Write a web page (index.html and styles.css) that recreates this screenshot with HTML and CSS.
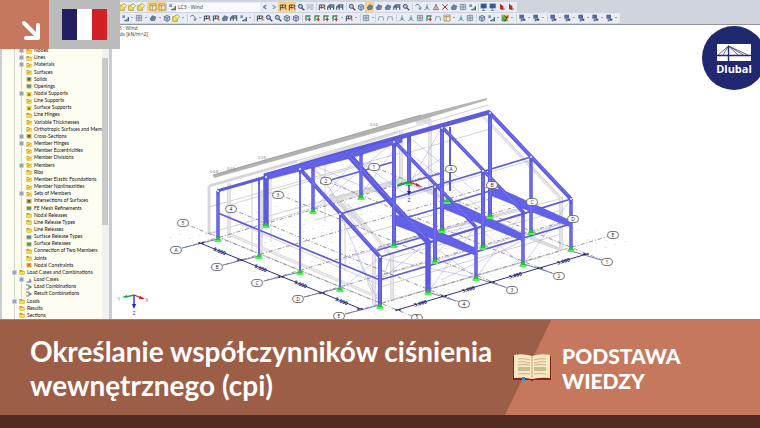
FILE: index.html
```html
<!DOCTYPE html>
<html lang="pl">
<head>
<meta charset="utf-8">
<title>Określanie współczynników ciśnienia wewnętrznego (cpi)</title>
<link rel="stylesheet" href="styles.css">
</head>
<body>
<svg class="symbols" aria-hidden="true">
  <symbol id="folder" viewBox="0 0 12 12"><path d="M1 2h4l1 1.500h5v7.500h-10z" fill="#b78b12"/><path d="M1.500 5h9v5.500h-9z" fill="#f8dc4c"/></symbol>
  <symbol id="member" viewBox="0 0 12 12"><path d="M1 2h4l1 1.500h5v7.500h-10z" fill="#c79a18"/><path d="M1.500 4h9v6.500h-9z" fill="#f8dc4c"/><path d="M3 9l6-4" stroke="#b5651d" stroke-width="1.500"/></symbol>
  <symbol id="solid" viewBox="0 0 12 12"><path d="M1 2h10v9h-10z" fill="#cfae28"/><path d="M3.500 4h5v5h-5z" fill="#3a62a0"/></symbol>
  <symbol id="support" viewBox="0 0 12 12"><path d="M1 2h10v9h-10z" fill="#ecc938"/><path d="M6 4l3 5h-6z" fill="#39751f"/></symbol>
  <symbol id="surface" viewBox="0 0 12 12"><path d="M1 2h10v9h-10z" fill="#c9b650"/><path d="M2 4h8v5h-8z" fill="#4b8daf"/></symbol>
  <symbol id="constraint" viewBox="0 0 12 12"><path d="M1 2h10v9h-10z" fill="#eab52e"/><path d="M3 4l6 5m0-5l-6 5" stroke="#c2421d" stroke-width="1.500"/></symbol>
  <symbol id="load" viewBox="0 0 12 12"><path d="M1 10h10M8 3v6M6 7l2 2 2-2" stroke="#33479c" stroke-width="1.500" fill="none"/></symbol>
  <symbol id="combo" viewBox="0 0 12 12"><path d="M0 2h6v8h-6" stroke="#555" stroke-width="1.500" fill="none"/><path d="M7 3l5 3-5 3z" fill="#1d8050"/></symbol>
  <symbol id="result" viewBox="0 0 12 12"><path d="M0 2h6v8h-6" stroke="#555" stroke-width="1.500" fill="none"/><path d="M7 3l5 3-5 3z" fill="#2d6bb5"/></symbol>

  <symbol id="t-open" viewBox="0 0 12 12"><path d="M1 4h7v7h-7z" fill="#f3dc55" stroke="#a98a1c"/><path d="M4 3l4-2 3 3-2 3" fill="#fff5a8" stroke="#8b8430"/></symbol>
  <symbol id="t-panel" viewBox="0 0 12 12"><path d="M1.500 1.500h9v9h-9z" fill="#fbeec3" stroke="#8c6f47"/><path d="M2 4h8M5 4v6" stroke="#8c6f47"/></symbol>
  <symbol id="t-case" viewBox="0 0 12 12"><path d="M2 2h4v4h-4z" fill="#7b93bb"/><path d="M5 10h6v-5" stroke="#3d5b96" stroke-width="2" fill="none"/><circle cx="9" cy="9" r="2" fill="#69a84a"/></symbol>
  <symbol id="t-prev" viewBox="0 0 12 12"><path d="M8 3l-4 3 4 3" stroke="#6578ae" stroke-width="2" fill="none"/></symbol>
  <symbol id="t-next" viewBox="0 0 12 12"><path d="M4 3l4 3-4 3" stroke="#94a1c0" stroke-width="2" fill="none"/></symbol>
  <symbol id="t-load" viewBox="0 0 12 12"><path d="M2 11v-8h8v3M5 3v5M2 7h8" stroke="#4a4f64" stroke-width="1.500" fill="none"/><path d="M8 5l3 5" stroke="#b3772b" stroke-width="2"/></symbol>
  <symbol id="t-find" viewBox="0 0 12 12"><circle cx="5" cy="5" r="3" fill="#a8c5e2" stroke="#44557d" stroke-width="1.500"/><path d="M7 7l4 4" stroke="#713f51" stroke-width="2"/></symbol>
  <symbol id="t-values" viewBox="0 0 12 12"><path d="M1 3h4m1 0h5M1 6h10M1 9h3m2 0h5" stroke="#9ba3b3" stroke-width="1.500"/></symbol>
  <symbol id="t-frame" viewBox="0 0 12 12"><path d="M1 10v-4l3-3h6v7M1 6h9M5 10v-6" stroke="#5b6983" stroke-width="2" fill="none"/></symbol>
  <symbol id="t-cube" viewBox="0 0 12 12"><path d="M2 4l4-2 4 2v5l-4 2-4-2z" fill="#b9c7dc" stroke="#465c87"/><path d="M2 4l4 2 4-2M6 6v5" stroke="#465c87" fill="none"/></symbol>
  <symbol id="t-render" viewBox="0 0 12 12"><path d="M1 7l4-5 6 2-2 6-6 1z" fill="#4f80b9"/><path d="M4 7l5-3-1 5z" fill="#d46347"/></symbol>
  <symbol id="t-rotate" viewBox="0 0 12 12"><path d="M2 4c3-4 8-1 7 5M7 8l2 2 2-3" stroke="#657086" stroke-width="1.500" fill="none"/></symbol>
  <symbol id="t-mirror" viewBox="0 0 12 12"><path d="M6 2l4 8h-8zM6 2v8" fill="#e4d9dd" stroke="#8e5260"/></symbol>
  <symbol id="t-cut" viewBox="0 0 12 12"><path d="M2 2l8 8M10 2l-8 8" stroke="#a83144" stroke-width="1.500"/></symbol>
  <symbol id="t-screen" viewBox="0 0 12 12"><path d="M1 1h9v7h-9z" fill="#345999"/><path d="M5 8v3M3 11h5" stroke="#5b6478"/></symbol>
  <symbol id="t-show" viewBox="0 0 12 12"><path d="M2 1h7v6h-7z" fill="#5269ae"/><path d="M4 7h3v4h-3z" fill="#6f7a90"/><path d="M7 7h4v3h-4z" fill="#49505f"/></symbol>
  <symbol id="t-book" viewBox="0 0 12 12"><path d="M3 1l5 4v6l-5-2z" fill="#bb2430"/><path d="M7 6l4 3-3 2z" fill="#d8726d"/></symbol>
  <symbol id="t-axes" viewBox="0 0 12 12"><path d="M3 10v-7h7" stroke="#3a8d52" stroke-width="2" fill="none"/><path d="M5 8h5M8 5v6" stroke="#bb3e45" stroke-width="2"/></symbol>
  <symbol id="t-mesh" viewBox="0 0 12 12"><path d="M2 2h8v8h-8z" fill="#cdd5e2"/><path d="M2 2h8v8h-8zM2 6h8M6 2v8" stroke="#6a7890" fill="none"/></symbol>
  <symbol id="t-line" viewBox="0 0 12 12"><path d="M2 10l1-6h6l1 6" stroke="#9ba5b6" stroke-width="1.500" fill="none"/></symbol>
  <symbol id="t-node" viewBox="0 0 12 12"><path d="M6 2v6l-4 2M6 8l4 2" stroke="#8392aa" stroke-width="1.500" fill="none"/><circle cx="6" cy="7" r="2" fill="#63a9a0"/></symbol>
  <symbol id="t-color" viewBox="0 0 12 12"><path d="M1 1h10v10h-10z" fill="#edc92c"/><path d="M1 1l10 10h-10z" fill="#51a450"/><path d="M6 6l5-5v5z" fill="#ce332f"/><path d="M4 2l5 4-4 5" stroke="#333" stroke-width="1.500" fill="none"/></symbol>
</svg>

<main class="page">
  <section class="workspace">
    <header class="toolbars">
      <div class="toolbar" data-row="first"></div>
      <div class="toolbar" data-row="second"></div>
    </header>
    <div class="panes">
      <aside class="navigator">
        <ul class="tree"></ul>
        <div class="scroll"><div class="thumb"></div></div>
      </aside>
      <div class="viewport">
        <svg class="model" viewBox="112 25 648 294" preserveAspectRatio="xMinYMin meet" role="img" aria-label="LC3 : Wind">
          <defs>
            <pattern id="dots" width="10" height="10" patternUnits="userSpaceOnUse" patternTransform="matrix(.96 -.28 .93 .38 218 240)"><circle cx="5" cy="5" r=".5" fill="#a9a9b2"/></pattern>
            <g id="foot"><path d="M0-3l3 4h-6z" fill="#22c92a"/><path d="M-3.500 1h7v2h-7z" fill="#48f552"/></g>
            <g id="bubble"><rect x="-5.500" y="-3.500" width="11" height="7" rx="3.500" fill="#fff" stroke="#555" stroke-width=".8"/></g>
            <path id="tick" d="M-2.500-1.300l2.500 1.300 2.500-1.300v2.600l-2.500-1.300-2.500 1.300z" fill="#171760"/>
          </defs>
          <g class="caption"><text x="113" y="30">LC3 : Wind</text><text x="111" y="36">Loads [kN/m^2]</text></g>
          <path d="M160 238l248-74 228 80-255 75z" fill="url(#dots)"/>

          <g class="ghost">
            <path d="M209 233v-47l191-55v48l-191 54 171 70 181-52v-54l-73-76M400 131l88-26M209 207l191-54M400 155l90-26M400 179l161 70"/>
            <path d="M380 276l181-52M380 287l181-53M392 243l171-45M392 258l171-48M392 300l150-43M230 205l142-43M265 222l135-39M315 220l130-36M350 238l150-42M380 246l155-42"/>
            <path d="M252 178v74M271 172v70M325 160v62M345 201v70M240 224l140 61M205 234l12-2M355 250l20 50 15-42M313 165l62 88"/>
          </g>
          <g class="ghost-wide">
            <path d="M229 183v55M261 190v66M401 130v51M430 123v71M374 253v52M392 252v48M561 197v53" stroke-width="4"/>
            <path d="M209 186v47M347 204l45 52M484 117l78 83M231 235l149 63M397 178l46 20M530 238l31 12M209 186l88-25M300 163l98-31" stroke-width="3"/>
            <path d="M330 200l72-20M330 194l40 38M416 123l15-4" stroke-width="4"/>
          </g>
          <g class="ghost-core"><path d="M229 183v55M401 130v51M430 123v71M374 253v52M392 252v48M561 197v53M347 204l45 52M484 117l78 83M231 235l149 63"/></g>
          <path d="M213 175l208-60v5l-207 58z" fill="#b2b2b3"/><path d="M213 175l208-60" stroke="#929294" stroke-width=".8"/>
          <path d="M421 115l66-17v2l-66 20z" fill="#b4b4b4"/>

          <g class="axes">
            <path d="M176 250l275-81M217 267l275-81M257 283l275-81M298 299l275-80M339 316l274-81"/>
            <path d="M183 223l234 95M231 209l233 95M278 194l234 96M326 181l233 95M374 167l233 95"/>
          </g>
          <g class="axis-ends"><path d="M182 248l36-9M223 265l36-9M264 281l36-9M304 297l36-9M345 314l35-9M428 292l28 9M476 278l29 9M524 264l28 9M571 251l30 9"/></g>

          <g class="bracing">
            <path d="M313 165l81 35M361 152l-48 59M313 170l48 27M394 141l96 75M409 137l73 60M394 141l-81 70M442 127l-33 58M340 214l40 92M380 257l-40 33M380 280l48-38M428 292l48-66M476 278l47-66M523 265l48-66M428 242l48 36M476 226l47 39M394 190l48-32M395 245l80-20M443 230l80-20M350 155l60 42M430 261l50-55M395 200l140-41M441 280l125-60M340 260l80-24M360 196l40-55M380 258l96 20"/>
          </g>

          <g class="beams">
            <path d="M218 191v48M571 199v51M531 157v75M523 212v53M476 227v51M313 165v46M361 152v46" stroke-width="3.500"/>
            <path d="M259 179v77M300 169v103M340 214v76M450 127v64" stroke-width="2"/>
            <path d="M394 142v103M442 127v103M490 113v103M435 187v75M483 170v77M380 257v49M409 136v49" stroke-width="4"/>
            <path d="M266 176v50M428 242v50" stroke-width="5.500"/>
            <path d="M218 213l162 67 191-56M380 257l191-58M340 214l191-57M429 243l142-44" stroke-width="1.700"/>
            <path d="M320 183l73-21M397 186l45-13M375 251l68-20M395 221l48-14M443 205l47-14" stroke-width="1.500"/>
            <path d="M217 191l49-14" stroke-width="3"/>
            <path d="M264 176l83-24 143-40" stroke-width="4.500"/>
            <path d="M300 169l80 88" stroke-width="4"/>
            <path d="M347 153l40 45 42 45" stroke-width="6"/>
            <path d="M394 141l82 86M442 127l82 86" stroke-width="3.500"/>
            <path d="M489 112l82 87" stroke-width="4"/>
          </g>
          <g fill="#6361e8" stroke="#5451cf" stroke-width=".6">
            <path d="M264 174l83-23 15-3 40-11v5l-55 17-82 21z"/>
            <path d="M395 215l15 3 65 30v7l-45-17-35-13zM442 200l17 4 64 30v7l-44-18-37-15zM490 187l17 5 64 29v6l-44-17-37-15z"/>
          </g>
          <g class="beam-light"><path d="M218 194v42M259 184v68M300 174v92M313 171v36M361 157v36M394 147v93M409 142v39M442 132v93M490 119v90M435 192v65M483 175v67M380 262v39M523 217v44M531 162v66M571 204v42M476 232v42M304 173l73 80M350 157l76 81M397 144l76 79M446 131l75 79M493 116l75 79"/></g>
          <g fill="#e9efff"><circle cx="218" cy="191" r="1"/><circle cx="266" cy="177" r="1"/><circle cx="300" cy="169" r="1"/><circle cx="394" cy="142" r="1"/><circle cx="442" cy="128" r="1"/><circle cx="490" cy="113" r="1"/><circle cx="340" cy="214" r="1"/><circle cx="380" cy="257" r="1"/><circle cx="435" cy="187" r="1"/><circle cx="483" cy="171" r="1"/><circle cx="531" cy="157" r="1"/><circle cx="571" cy="199" r="1"/></g>

          <g>
            <use href="#foot" x="218" y="239"/><use href="#foot" x="259" y="256"/><use href="#foot" x="266" y="225"/><use href="#foot" x="300" y="272"/><use href="#foot" x="313" y="211"/><use href="#foot" x="340" y="289"/><use href="#foot" x="380" y="306"/><use href="#foot" x="428" y="292"/><use href="#foot" x="394" y="245"/><use href="#foot" x="435" y="261"/><use href="#foot" x="442" y="230"/><use href="#foot" x="361" y="197"/><use href="#foot" x="476" y="278"/><use href="#foot" x="483" y="247"/><use href="#foot" x="490" y="216"/><use href="#foot" x="523" y="264"/><use href="#foot" x="531" y="232"/><use href="#foot" x="571" y="249"/><use href="#foot" x="447" y="201"/><use href="#foot" x="409" y="183"/>
          </g>

          <g stroke="#30308a" stroke-width="1" fill="none"><path d="M200 243l161 66M397 310l190-56"/></g>
          <g>
            <use href="#tick" x="201" y="243"/><use href="#tick" x="240" y="260"/><use href="#tick" x="281" y="277"/><use href="#tick" x="322" y="293"/><use href="#tick" x="360" y="309"/><use href="#tick" x="398" y="310"/><use href="#tick" x="444" y="296"/><use href="#tick" x="492" y="282"/><use href="#tick" x="540" y="268"/><use href="#tick" x="586" y="254"/>
          </g>
          <g class="dims">
            <text transform="translate(219 253) rotate(22)">5.000</text><text transform="translate(260 270) rotate(22)">5.000</text><text transform="translate(300 286) rotate(22)">5.000</text><text transform="translate(341 303) rotate(22)">5.000</text>
            <text transform="translate(421 305) rotate(-16)">5.000</text><text transform="translate(469 291) rotate(-16)">5.000</text><text transform="translate(516 277) rotate(-16)">5.000</text><text transform="translate(564 263) rotate(-16)">5.000</text>
          </g>

          <g class="labels">
            <use href="#bubble" x="176" y="250"/><text x="176" y="252">A</text><use href="#bubble" x="217" y="267"/><text x="217" y="269">B</text><use href="#bubble" x="257" y="283"/><text x="257" y="285">C</text><use href="#bubble" x="298" y="299"/><text x="298" y="301">D</text><use href="#bubble" x="339" y="316"/><text x="339" y="318">E</text>
            <use href="#bubble" x="451" y="169"/><text x="451" y="171">A</text><use href="#bubble" x="492" y="185"/><text x="492" y="187">B</text><use href="#bubble" x="532" y="202"/><text x="532" y="204">C</text><use href="#bubble" x="573" y="219"/><text x="573" y="221">D</text><use href="#bubble" x="613" y="235"/><text x="613" y="237">E</text>
            <use href="#bubble" x="183" y="223"/><text x="183" y="225">5</text><use href="#bubble" x="231" y="209"/><text x="231" y="211">4</text><use href="#bubble" x="278" y="195"/><text x="278" y="197">3</text><use href="#bubble" x="326" y="181"/><text x="326" y="183">2</text><use href="#bubble" x="374" y="167"/><text x="374" y="169">1</text>
            <use href="#bubble" x="417" y="318"/><text x="417" y="319">5</text><use href="#bubble" x="464" y="304"/><text x="464" y="306">4</text><use href="#bubble" x="512" y="290"/><text x="512" y="292">3</text><use href="#bubble" x="559" y="276"/><text x="559" y="278">2</text><use href="#bubble" x="607" y="262"/><text x="607" y="264">1</text>
          </g>
          <g class="loads"><text x="214" y="173">0.68</text><text x="231" y="170">0.56</text><text x="262" y="159">0.56</text><text x="374" y="126">0.56</text></g>

          <g stroke-width="1.300">
            <path d="M134 295l-8 2" stroke="#0bb53a"/><path d="M127 295l-5 2 5 1z" fill="#0bb53a"/>
            <path d="M134 295l8 3" stroke="#d31c2b"/><path d="M140 296l5 3-6 0z" fill="#d31c2b"/>
            <path d="M134 295v10" stroke="#1f1fc4"/><path d="M132 304h4l-2 5z" fill="#1f1fc4"/>
            <path d="M409 182l-9 2" stroke="#0bb53a"/><path d="M402 182l-5 3 5 0z" fill="#0bb53a"/>
            <path d="M409 182l9 3" stroke="#d31c2b"/><path d="M416 183l6 4-6-1z" fill="#d31c2b"/>
            <path d="M409 185v7" stroke="#1f1fc4"/><path d="M407 191h4l-2 5z" fill="#1f1fc4"/>
          </g>
          <g class="gizmo"><text x="119" y="301" fill="#3bb55a">Y</text><text x="147" y="302" fill="#d3404b">X</text><text x="134" y="315" fill="#3535c4">Z</text><text x="409" y="202" fill="#3535c4">Z</text></g>
        </svg>
      </div>
    </div>
  </section>

  <section class="banner">
    <h1 class="title">Określanie współczynników ciśnienia wewnętrznego (cpi)</h1>
    <div class="category">
      <svg class="book" viewBox="0 0 38 28" aria-hidden="true">
        <path d="M0 2h38v24H21q-2 2-4 0H0z" fill="#8b231f"/>
        <path d="M1 24V1q9-2 18 1 9-3 18-1v23q-9-1-18 1-9-2-18-1z" fill="#f8e9c2"/>
        <path d="M19 2v22" stroke="#ddc99d" stroke-width="2"/>
        <path d="M5 5q6-1 12 1M5 8q6-1 12 1M5 11q6-1 12 0M5 20q6-1 12 0M21 6q6-2 12-1M21 9q6-2 12-1M21 11q6-1 12 0M21 20q6-1 12 0" stroke="#c3b48a" fill="none"/>
        <path d="M5 13h12v4h-12zM21 13h12v4h-12z" fill="#ccbd91"/>
        <path d="M9 23h3v4l-1.500-1-1.500 1z" fill="#1895cf"/>
      </svg>
      <p class="category-name">PODSTAWA<br>WIEDZY</p>
    </div>
  </section>
  <footer class="base"></footer>

  <div class="badge">
    <div class="badge-arrow"><svg viewBox="0 0 24 24" aria-hidden="true"><path d="M5 4l14 14M19 6v13H7" fill="none" stroke="#fff" stroke-width="4" stroke-linecap="round" stroke-linejoin="round"/></svg></div>
    <div class="badge-flag"><div class="flag"><i></i><i></i><i></i></div></div>
  </div>
  <div class="brand">
    <svg viewBox="0 0 34 18" aria-hidden="true"><path d="M0 0h34v17H0z" fill="#fff"/><path d="M0 11.500h34M11.500 2v15" stroke="#20286f" stroke-width="1.400"/><path d="M1 11L11.500 2 31 11M6 11l5.500-9L21 11M11.500 2l15 9" stroke="#20286f" stroke-width=".7" fill="none"/></svg>
    <span>Dlubal</span>
  </div>
</main>
<script src="app.js"></script>
</body>
</html>
```
FILE: styles.css
```css
* { box-sizing: border-box; }
body { margin: 0; background: #fff; font-family: "Open Sans", "Noto Sans", sans-serif; }
.symbols { position: absolute; width: 0; height: 0; }
.page { position: relative; display: flex; flex-direction: column; min-height: 100vh; overflow: hidden; }

.workspace { flex: 1; display: flex; flex-direction: column; min-height: 0; background: #fff; }
.toolbars { background: #d0d5dd; border-bottom: 1px solid #8f959d; padding: 2px 0 1px 118px; display: flex; flex-direction: column; align-items: flex-start; gap: 1px; }
.toolbar { display: flex; align-items: center; height: 10px; background: #e8ecf4; border-radius: 1px; padding-right: 2px; }
.tool { display: flex; align-items: center; justify-content: center; width: 9px; height: 10px; padding: 0; border: 0; background: none; }
.tool svg { width: 8px; height: 8px; }
.tool.active { background: #ffd27a; }
.tool.more { width: 5px; }
.tool.more::before { content: ""; border: 1px solid transparent; border-top-color: #555; }
.gap { width: 3px; height: 8px; border-right: 1px solid #cbd1db; }
.gap.small { width: 1px; }
.case { width: 84px; height: 9px; border: 0; padding: 0 2px; background: #f7f9fc; color: #333; font: 5px "Open Sans", sans-serif; appearance: none; }

.panes { flex: 1; display: flex; min-height: 0; }
.navigator { flex: none; width: 112px; display: flex; background: #fdfdf2; border-left: 2px solid #c9cdd4; border-right: 3px solid #c9cdd6; }
.tree { flex: 1; min-width: 0; margin: 0; padding: 22px 0 0; list-style: none; display: grid; grid-auto-rows: minmax(7px, 1fr); overflow: hidden; }
.tree li { display: flex; align-items: center; gap: 2px; padding-left: 17px; font-family: Lato, sans-serif; font-size: 5px; line-height: 7px; color: #111; white-space: nowrap; background: linear-gradient(#d5d5cc, #d5d5cc) 12px 0 / 1px 100% no-repeat, linear-gradient(#d5d5cc, #d5d5cc) 19px 0 / 1px 100% no-repeat; }
.tree li.top { padding-left: 10px; background: linear-gradient(#d5d5cc, #d5d5cc) 12px 0 / 1px 100% no-repeat; }
.tree svg { flex: none; width: 6px; height: 6px; }
.knob { flex: none; width: 5px; height: 5px; border: 1px solid transparent; }
.knob.open { border-color: #ccd0d8; background: #9aa2b4; border-radius: 1px; }
.scroll { flex: none; width: 7px; background: #f0f0ee; padding: 33px 1px 0 0; }
.thumb { height: 64%; background: #c9c9ca; }

.viewport { flex: 1; min-width: 0; background: #fff; }
.model { display: block; width: 100%; height: auto; font-family: "Open Sans", sans-serif; }
.caption { font-size: 5px; fill: #333; }
.ghost { fill: none; stroke: #d2d2d4; stroke-width: 1; }
.ghost-wide { fill: none; stroke: #cfcfd1; opacity: .7; }
.ghost-core { fill: none; stroke: #f0f0f1; stroke-width: 1; }
.axes { fill: none; stroke: #77777d; stroke-width: 1; stroke-dasharray: 4 2 1 2; opacity: .75; }
.axis-ends { fill: none; stroke: #7676b5; stroke-width: 1; }
.bracing { fill: none; stroke: #8b8be5; stroke-width: 1; opacity: .4; }
.beams { fill: none; stroke: #5e5bdd; stroke-linejoin: round; }
.beam-light { fill: none; stroke: #7d79fa; stroke-width: 1; }
.dims { font-size: 5px; font-weight: 700; fill: #171760; text-anchor: middle; }
.labels { font-size: 5px; fill: #222; text-anchor: middle; }
.loads { font-size: 4px; fill: #777; text-anchor: middle; }
.gizmo { font-size: 5px; text-anchor: middle; }

.banner { flex: none; display: flex; justify-content: space-between; min-height: 96px; background: #9d5e48; border-top: 1px solid #b57a67; color: #fff; font-family: Lato, sans-serif; }
.title { flex: 1; margin: 0; padding: 14px 0 12px 30px; font-size: 28px; line-height: 34px; font-weight: 700; }
.category { flex: none; width: 256px; display: flex; align-items: center; gap: 11px; padding-left: 9px; background: linear-gradient(116deg, #9d5e48 42px, #c5785d 43px); }
.book { flex: none; width: 38px; height: 28px; }
.category-name { margin: 0; font-size: 21px; line-height: 25px; font-weight: 900; }
.base { flex: none; height: 13px; background: #522c20; }

.badge { position: absolute; top: 0; left: 0; display: flex; height: 49px; }
.badge-arrow { width: 49px; display: flex; align-items: flex-end; justify-content: flex-end; padding: 6px; background: #c5785d; }
.badge-arrow svg { width: 24px; height: 24px; }
.badge-flag { width: 71px; display: grid; place-items: center; background: #bbb; }
.flag { display: flex; width: 45px; height: 31px; }
.flag i { flex: 1; background: #fff; }
.flag i:first-child { background: #22205f; }
.flag i:last-child { background: #d22027; }
.brand { position: absolute; top: 26px; right: -6px; width: 64px; height: 64px; border-radius: 50%; background: #20286f; color: #fff; display: flex; flex-direction: column; align-items: center; padding-top: 18px; font-size: 11px; line-height: 14px; font-weight: 700; }
.brand svg { width: 34px; height: 18px; }
```
FILE: app.js
```js
const icon = (id) => `<svg aria-hidden="true"><use href="#${id}"/></svg>`;

/* "*" marks a pressed button, "v" a drop arrow, "|" and "." wide and narrow gaps. */
const rows = {
  first: 't-open t-open t-open | *t-panel *t-panel . t-case CASE t-prev t-next *t-load *t-load t-find t-values | t-load t-frame t-frame | t-find t-cube *t-render t-render t-render t-frame t-find | t-rotate t-node t-mirror t-cut t-render t-mesh t-case | t-screen t-screen t-book t-book',
  second: '. . t-case v t-mesh v t-render v t-cube t-open v | t-rotate v t-load t-load t-render t-frame t-case v | t-load t-find t-find t-cube t-cube | t-axes t-axes t-axes t-axes v t-load v | t-mesh v . t-line t-line | t-node t-node t-mesh t-axes t-line t-panel v t-node t-mesh | t-cube t-case v t-color v | t-show v t-show v | t-show v t-show v t-show v t-show v t-show v'
};
const label = (id) => id.slice(2);
for (const [name, spec] of Object.entries(rows)) {
  document.querySelector(`[data-row="${name}"]`).innerHTML = spec.split(' ').map((t) => {
    if (t === '|') return '<span class="gap"></span>';
    if (t === '.') return '<span class="gap small"></span>';
    if (t === 'v') return '<button class="tool more" aria-label="more"></button>';
    if (t === 'CASE') return '<select class="case" aria-label="Load case"><option>LC3 - Wind</option></select>';
    const active = t[0] === '*';
    const id = active ? t.slice(1) : t;
    return `<button class="tool${active ? ' active' : ''}" aria-label="${label(id)}">${icon(id)}</button>`;
  }).join('');
}

/* "+" marks an entry that opens, "^" an entry of the upper level. */
const tree = `+folder Nodes
+folder Lines
+member Materials
member Surfaces
solid Solids
surface Openings
+support Nodal Supports
member Line Supports
support Surface Supports
folder Line Hinges
member Variable Thicknesses
member Orthotropic Surfaces and Memb
+solid Cross-Sections
+member Member Hinges
member Member Eccentricities
member Member Divisions
+member Members
folder Ribs
member Member Elastic Foundations
member Member Nonlinearities
+member Sets of Members
solid Intersections of Surfaces
surface FE Mesh Refinements
folder Nodal Releases
folder Line Release Types
folder Line Releases
surface Surface Release Types
surface Surface Releases
folder Connection of Two Members
folder Joints
constraint Nodal Constraints
^+folder Load Cases and Combinations
+load Load Cases
combo Load Combinations
result Result Combinations
^+folder Loads
^folder Results
^folder Sections`;
document.querySelector('.tree').innerHTML = tree.split('\n').map((line) => {
  const [, top, plus, id, text] = line.match(/^(\^?)(\+?)(\w+) (.*)$/);
  return `<li class="${top ? 'top' : 'sub'}"><span class="knob${plus ? ' open' : ''}"></span>${icon(id)}<span>${text}</span></li>`;
}).join('');
```
